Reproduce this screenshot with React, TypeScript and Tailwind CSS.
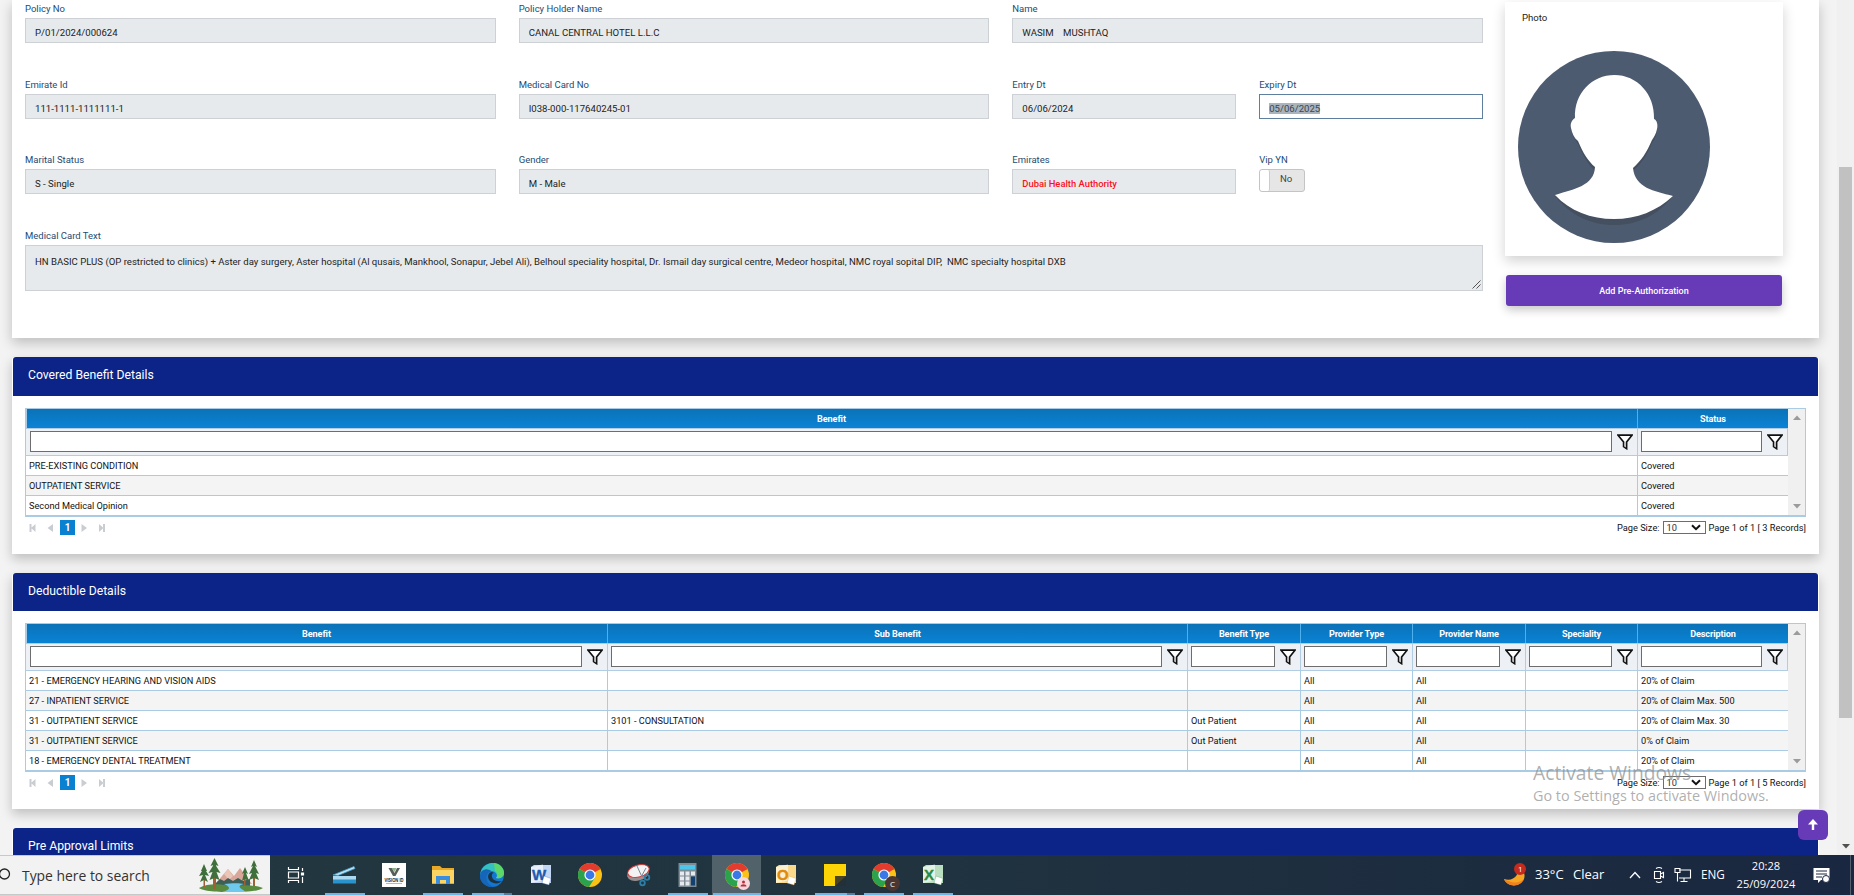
import React from "react";
import { useState } from "react";

interface field_props {
  label: string;
  value: string;
  box?: string;
  text?: string;
}

const Field = ({ label, value, box, text }: field_props) => {
  return (
    <div className="flex flex-col flex-1 min-w-0">
      <label className="h-[18px] leading-[18px] text-[9.5px] text-[#1d4b73] whitespace-nowrap">
        {label}
      </label>
      <div
        className={`h-[25px] border px-[9px] pt-[2px] leading-[23px] text-[9.6px] whitespace-pre ${
          box ? box : "bg-[#e7eaed] border-[#cdd1d5]"
        }`}
      >
        <span className={text ? text : "text-[#222]"}>{value}</span>
      </div>
    </div>
  );
};

const Filter_icon = () => (
  <svg width="16" height="16" viewBox="0 0 16 16" className="shrink-0">
    <path
      d="M1 1.2h14L9.6 8v6.6L6.6 12.6V8z"
      fill="#fff"
      stroke="#111"
      strokeWidth="1.7"
    />
    <path d="M7.4 8.4h1.6v5l-1.6-1z" fill="#bbb" />
  </svg>
);

interface table_props {
  columns: { name: string; width: string }[];
  rows: string[][];
}

const Grid_table = ({ columns, rows }: table_props) => {
  return (
    <div className="flex border border-[#a9cbe4] border-b-2 w-[1781px]">
      <div className="flex flex-col w-[1762px]">
        <div className="flex h-[19px] border-l border-[#a9cbe4] bg-gradient-to-b from-[#0b72b8] to-[#0a83d5]">
          {columns.map((col) => (
            <div
              key={col.name}
              className={`${col.width} first:-ml-px shrink-0 border-r border-[#4fb0ee] last:border-r-0 text-center text-white font-bold text-[9.1px] tracking-[-0.1px] leading-[20px]`}
            >
              {col.name}
            </div>
          ))}
        </div>
        <div className="flex h-[28px] bg-[#edf1f5] border-y border-[#b0cde3]">
          {columns.map((col) => (
            <div
              key={col.name}
              className={`${col.width} shrink-0 flex items-center border-r border-[#b0cde3] pl-[3px] first:pl-1 pr-1 pb-[1px]`}
            >
              <input className="flex-1 min-w-0 h-[21px] bg-white border border-[#6d6d6d] mr-[5px] outline-none" />
              <Filter_icon />
            </div>
          ))}
        </div>
        <div className="flex flex-col">
          {rows.map((row, i) => (
            <div
              key={i}
              className="flex h-5 bg-white even:bg-[#f4f4f4] border-b border-[#a9cbe4] last:border-b-0 last:h-[19px]"
            >
              {row.map((cell, j) => (
                <div
                  key={j}
                  className={`${columns[j].width} shrink-0 border-r border-[#a9cbe4] last:border-r-0 pl-[3px] text-[9.2px] leading-[19px] text-[#111] whitespace-nowrap`}
                >
                  {cell}
                </div>
              ))}
            </div>
          ))}
        </div>
      </div>
      <div className="flex flex-col items-center justify-between flex-1 bg-[#f0f0f0] pt-[6px] pb-[6px]">
        <svg width="8" height="5" viewBox="0 0 8 5">
          <path d="M0 5L4 0.5L8 5z" fill="#9b9b9b" />
        </svg>
        <svg width="8" height="5" viewBox="0 0 8 5">
          <path d="M0 0L4 4.5L8 0z" fill="#9b9b9b" />
        </svg>
      </div>
    </div>
  );
};

const Pager = ({ records }: { records: number }) => {
  return (
    <div className="flex items-center justify-between w-[1781px] h-[15px] mt-[3px]">
      <div className="flex items-center h-full">
        <svg width="35" height="10" viewBox="0 0 35 10" fill="#c9cdd1">
          <path d="M4.500 1h2v8h-2zM10.500 1v8L6 5z" />
          <path d="M28 1v8L22.500 5z" />
        </svg>
        <div className="w-[15px] h-[15px] bg-[#0a80d0] text-white font-bold text-[10px] leading-[15px] text-center">
          1
        </div>
        <svg width="35" height="10" viewBox="0 0 35 10" fill="#c9cdd1">
          <path d="M6.500 1v8L12 5z" />
          <path d="M24 1v8L28.500 5zM28 1h2v8h-2z" />
        </svg>
      </div>
      <div className="flex items-center h-full text-[9.25px] text-[#111] whitespace-nowrap">
        <span>Page Size:</span>
        <div className="flex items-center justify-between w-[43px] h-[13px] border border-[#6d6d6d] bg-white ml-[3px] mr-[3px] pl-[3px] pr-[4px] text-[#333]">
          <span>10</span>
          <svg width="10" height="7" viewBox="0 0 10 7">
            <path
              d="M1 1.200L5 5.200L9 1.200"
              fill="none"
              stroke="#111"
              strokeWidth="2"
            />
          </svg>
        </div>
        <span>Page 1 of 1 [ {records} Records]</span>
      </div>
    </div>
  );
};

const Panel_title = ({ title, height }: { title: string; height: string }) => (
  <div
    className={`${height} mx-[1px] shrink-0 bg-[#0c2488] rounded-t-[3px] pl-[15px] pt-[9px] text-white text-[12.2px] leading-[18px]`}
  >
    {title}
  </div>
);

const card_shadow = "shadow-[0_5px_12px_rgba(0,0,0,0.22)]";

const benefit_columns = [
  { name: "Benefit", width: "w-[1612px]" },
  { name: "Status", width: "w-[150px]" },
];

const benefit_rows = [
  ["PRE-EXISTING CONDITION", "Covered"],
  ["OUTPATIENT SERVICE", "Covered"],
  ["Second Medical Opinion", "Covered"],
];

const deductible_columns = [
  { name: "Benefit", width: "w-[582px]" },
  { name: "Sub Benefit", width: "w-[580px]" },
  { name: "Benefit Type", width: "w-[113px]" },
  { name: "Provider Type", width: "w-[112px]" },
  { name: "Provider Name", width: "w-[113px]" },
  { name: "Speciality", width: "w-[112px]" },
  { name: "Description", width: "w-[150px]" },
];

const deductible_rows = [
  ["21 - EMERGENCY HEARING AND VISION AIDS", "", "", "All", "All", "", "20% of Claim"],
  ["27 - INPATIENT SERVICE", "", "", "All", "All", "", "20% of Claim Max. 500"],
  ["31 - OUTPATIENT SERVICE", "3101 - CONSULTATION", "Out Patient", "All", "All", "", "20% of Claim Max. 30"],
  ["31 - OUTPATIENT SERVICE", "", "Out Patient", "All", "All", "", "0% of Claim"],
  ["18 - EMERGENCY DENTAL TREATMENT", "", "", "All", "All", "", "20% of Claim"],
];

const Avatar = () => (
  <svg width="192" height="192" viewBox="0 0 192 192" className="block">
    <circle cx="96" cy="96" r="96" fill="#4d5b70" />
    <g fill="#444f60">
      <path d="M53 78C54 84 57 88 60 93C64 103 70 113 76 119L90 104L102 104L116 119C123 113 130 103 134 92C137 88 139 84 139 78z" />
      <path d="M37 145C52 164 72 174 96 174C120 174 140 164 155 145z" />
    </g>
    <path
      d="M57 67C56 42 74 24 96.500 24C119 24 137 43 136 68C139 69 140 74 139 78C138 83 136 86 134 89C129 101 123 110 115 117C117 137 136 140 155 145C139 160 119 168 96 168C73 168 52 160 37 144C56 138 76 135 77 116C70 110 65 102 60 90C56 87 54 82 53 77C52 72 54 69 57 67z"
      fill="#fff"
    />
  </svg>
);

const Chrome = () => (
  <svg width="24" height="24" viewBox="0 0 24 24">
    <circle cx="12" cy="12" r="12" fill="#fbc116" />
    <path d="M12 12L1.600 6A12 12 0 0 1 22.400 6z" fill="#e33b2e" />
    <path d="M12 12L1.600 6A12 12 0 0 0 11 24L17 14.500z" fill="#2ba24c" />
    <path d="M12 6H22.400L17 8z" fill="#e33b2e" />
    <circle cx="12" cy="12" r="5.600" fill="#fff" />
    <circle cx="12" cy="12" r="4.400" fill="#3b78e7" />
  </svg>
);

const Office = ({ letter, color, light }: { letter: string; color: string; light: string }) => (
  <svg width="24" height="24" viewBox="0 0 24 24">
    <path d="M5 2h17v18H2V4z" fill={light} />
    <path d="M2 4L14 1.500v16L2 20z" fill="#fff" opacity="0.6" />
    <text x="3" y="16.500" fontSize="15" fontWeight="700" fontFamily="Liberation Sans, sans-serif" fill={color} stroke={color} strokeWidth="0.400">
      {letter}
    </text>
    <path d="M15 13l7 2.500-2 6.500-7-2z" fill="#fff" stroke={color} strokeWidth="0.300" />
  </svg>
);

const tasks = [
  {
    line: "",
    icon: (
      <svg width="18" height="18" viewBox="0 0 18 18" fill="none" stroke="#fff" strokeWidth="1.200">
        <path d="M1.500 1v2.500h10V1M1.500 17v-2.500h10V17M1.500 6h10v6h-10zM15.500 2v3M15.500 11v6" />
        <path d="M14.500 7h2v2h-2z" fill="#fff" />
      </svg>
    ),
  },
  {
    line: "w-10",
    icon: (
      <svg width="26" height="20" viewBox="0 0 26 20">
        <path d="M1 10L22 1.500l1 2L6 10.500z" fill="#bfe3f5" stroke="#4ba3d1" strokeWidth="0.800" />
        <path d="M1 11.500h23v7H1z" fill="#2b93cb" />
        <path d="M1 11h23v3.500H1z" fill="#a9d8f0" />
      </svg>
    ),
  },
  {
    line: "",
    icon: (
      <svg width="24" height="24" viewBox="0 0 24 24">
        <path d="M0 0h24v24H0z" fill="#fff" />
        <path d="M6.500 5h3.500l2.500 5L15 5h3l-4.500 8h-2.500z" fill="#56605a" />
        <path d="M9.500 5h5l-2 4z" fill="#8fb08a" />
        <text x="2.500" y="18.500" fontSize="4.800" fontWeight="700" fontFamily="Liberation Sans, sans-serif" fill="#222" textLength="19" lengthAdjust="spacingAndGlyphs">
          VISION ID
        </text>
        <path d="M4 20.500h16" stroke="#999" strokeWidth="0.700" />
      </svg>
    ),
  },
  {
    line: "w-10",
    icon: (
      <svg width="24" height="20" viewBox="0 0 24 20">
        <path d="M1 1h8l2 2h12v16H1z" fill="#e9a825" />
        <path d="M1 5h22v13H1z" fill="#fcd462" />
        <path d="M5 11h14v8h-4v-4H9v4H5z" fill="#3b8ede" />
      </svg>
    ),
  },
  {
    line: "w-10",
    stacked: true,
    icon: (
      <svg width="24" height="24" viewBox="0 0 24 24">
        <circle cx="12" cy="12" r="12" fill="#1477cf" />
        <path d="M1 8C4 1 10 0 13 0c7 0 11 5 11 10 0 4-4 6-8 5 2-2 1-6-4-7C7 7 3 8 0 13z" fill="#35c1c0" />
        <path d="M14 0c6 1 10 5 10 10 0 4-4 6-8 5 2-2 2-5-1-7z" fill="#5fd668" />
        <path d="M12 9c-5 1-5 7-1 10 4 2 8 2 11-1-3 1-9 0-10-4-.5-2 0-4 2-4z" fill="#1d3340" />
        <path d="M8 10c-4 6 0 12 6 14C4 25-3 16 1 9c3-4 8-3 10-1z" fill="#1565b8" />
      </svg>
    ),
  },
  { line: "", icon: <Office letter="W" color="#1f5ab0" light="#c3d6f3" /> },
  { line: "", icon: <Chrome /> },
  {
    line: "",
    icon: (
      <svg width="26" height="24" viewBox="0 0 26 24">
        <ellipse cx="12" cy="11" rx="11" ry="6.500" fill="#9a8f90" transform="rotate(-15 12 11)" />
        <ellipse cx="12.500" cy="8" rx="11" ry="6" fill="#f3f3f3" stroke="#d23a3a" transform="rotate(-15 12.500 8)" />
        <path d="M11 3l5 11M20 5l-5 9" stroke="#789" strokeWidth="1" />
        <circle cx="21" cy="14.500" r="2.300" fill="none" stroke="#2c7fa8" strokeWidth="1.800" />
        <circle cx="16.500" cy="20" r="2.300" fill="none" stroke="#2c7fa8" strokeWidth="1.800" />
      </svg>
    ),
  },
  {
    line: "w-10",
    icon: (
      <svg width="20" height="24" viewBox="0 0 20 24">
        <path d="M0.500 0h18v24h-18z" fill="#7d8b97" />
        <path d="M2 2h15v4.500H2z" fill="#4cc5ea" />
        <path d="M2 8.500h4v4H2zM7.500 8.500h4v4h-4zM13 8.500h4v4h-4zM2 13.500h4v4H2zM7.500 13.500h4v4h-4zM2 18.500h4v4H2zM7.500 18.500h4v4h-4z" fill="#e6eaed" />
        <path d="M13 13.500h4v9h-4z" fill="#14406f" />
      </svg>
    ),
  },
  {
    line: "w-12",
    active: true,
    icon: (
      <>
        <Chrome />
        <svg className="absolute right-[11px] bottom-[5px]" width="13" height="13" viewBox="0 0 13 13">
          <circle cx="6.500" cy="6.500" r="6.500" fill="#f7d9dd" />
          <circle cx="6.500" cy="5" r="1.500" fill="#b8303c" />
          <path d="M3.500 9.500c0-3 6-3 6 0z" fill="#b8303c" />
        </svg>
      </>
    ),
  },
  { line: "", icon: <Office letter="O" color="#e08a0c" light="#fbd98a" /> },
  {
    line: "w-10",
    stacked: true,
    icon: (
      <svg width="22" height="22" viewBox="0 0 22 22">
        <path d="M0 0h22v12l-10 10H0z" fill="#fdd406" />
        <path d="M11 12h11v10H11z" fill="#243038" />
        <path d="M11 12h11L11 22z" fill="#4a4426" />
      </svg>
    ),
  },
  {
    line: "w-10",
    icon: (
      <>
        <Chrome />
        <div className="absolute right-[8px] bottom-[4px] w-[15px] h-[15px] rounded-full bg-[#4a3733] text-white text-[8px] leading-[15px] text-center">
          C
        </div>
      </>
    ),
  },
  { line: "w-10", icon: <Office letter="X" color="#2c8a45" light="#b9dfc0" /> },
];

const Scene = () => (
  <svg width="66" height="36" viewBox="0 0 66 36">
    <path d="M18 26L30 12l6 7 6-8 12 16z" fill="#d9a79a" />
    <path d="M26 17l4-5 5 7-4 4z" fill="#e9c6b8" />
    <path d="M18 26l4-4 4 2 4-3 5 3 5-3 5 3 7-2v8H18z" fill="#3c5f5a" />
    <path d="M1 31c8-5 20-4 26-3 10 2 24-2 38 3-6 4-20 4-30 4S6 35 1 31z" fill="#5a8a3e" />
    <path d="M26 27c8-1 16-1 20 0-8 2-4 4 2 8H24c10-3 8-5 2-8z" fill="#6fc9ee" />
    <path d="M5.500 12h1.500v18H5.500zM15 6h3v26h-3zM46 12h1.500v17H46zM55 8h2v21h-2z" fill="#a05f35" />
    <path d="M6 7l3 7H8l3 5-4-1 3 7-4-2-4 2 3-7-4 1 3-5H3zM16.500 1l4 8-3-1 5 8-4-1 3 8-5-2-5 2 3-8-4 1 5-8-3 1zM47 10l3 7-2-1 3 8-4-2-3 2 2-8-2 1zM56 3l3 7-2-1 4 8-3-1 3 7-5-2-5 2 3-7-3 1 4-8-2 1z" fill="#3f6f3a" />
  </svg>
);

const App = () => {
  const [vip, set_vip] = useState<boolean>(false);

  return (
    <div className="h-screen w-full flex flex-col overflow-hidden bg-[#f0f0f0] font-[Roboto,sans-serif]">
      <div className="relative flex h-[855px] shrink-0 overflow-hidden">
        <div className="flex flex-col w-[1837px] px-[12px] pr-[18px] bg-[#f3f3f3]">
          {/* member details */}
          <div className={`flex h-[338px] shrink-0 bg-white pl-[13px] ${card_shadow}`}>
            <div className="flex flex-col w-[1458px]">
              <div className="flex gap-[23px] h-[76px]">
                <Field label="Policy No" value="P/01/2024/000624" />
                <Field label="Policy Holder Name" value="CANAL CENTRAL HOTEL L.L.C" />
                <Field label="Name" value="WASIM    MUSHTAQ" />
              </div>
              <div className="flex gap-[23px] h-[75px]">
                <Field label="Emirate Id" value="111-1111-1111111-1" />
                <Field label="Medical Card No" value="I038-000-117640245-01" />
                <div className="flex flex-1 gap-[23px]">
                  <Field label="Entry Dt" value="06/06/2024" />
                  <Field
                    label="Expiry Dt"
                    value="05/06/2025"
                    box="bg-white border-[#5f7f9e]"
                    text="bg-[#a9b4bd] text-[#3c4650]"
                  />
                </div>
              </div>
              <div className="flex gap-[23px] h-[76px]">
                <Field label="Marital Status" value="S - Single" />
                <Field label="Gender" value="M - Male" />
                <div className="flex flex-1 gap-[23px]">
                  <Field
                    label="Emirates"
                    value="Dubai Health Authority"
                    text="text-[#fb1020] text-[9.4px] font-medium"
                  />
                  <div className="flex flex-col flex-1">
                    <label className="h-[18px] leading-[18px] text-[9.5px] text-[#1d4b73]">
                      Vip YN
                    </label>
                    <button
                      className="flex w-[46px] h-[23px] border border-[#c4c4c4] rounded-[3px] bg-[#e6e6e6] overflow-hidden"
                      onClick={() => set_vip(!vip)}
                    >
                      <span className="w-[10px] h-full bg-white border-r border-[#ccc] rounded-[2px]"></span>
                      <span className="flex-1 text-[9.6px] leading-[18px] text-[#444] text-center pr-[2px]">
                        {vip ? "Yes" : "No"}
                      </span>
                    </button>
                  </div>
                </div>
              </div>
              <label className="h-[18px] leading-[18px] text-[9.5px] text-[#1d4b73]">
                Medical Card Text
              </label>
              <div className="relative h-[46px] bg-[#e7eaed] border border-[#cdd1d5] px-[9px] pt-[5px] text-[9.59px] leading-[22px] text-[#222] whitespace-pre">
                HN BASIC PLUS (OP restricted to clinics) + Aster day surgery, Aster hospital (Al qusais, Mankhool, Sonapur, Jebel Ali), Belhoul speciality hospital, Dr. Ismail day surgical centre, Medeor hospital, NMC royal sopital DIP,  NMC specialty hospital DXB
                <svg className="absolute right-[1px] bottom-[1px]" width="9" height="9" viewBox="0 0 9 9">
                  <path d="M0.500 8.500L8.500 0.500M4.500 8.500L8.500 4.500" stroke="#555" strokeWidth="1" />
                </svg>
              </div>
            </div>
            <div className="flex flex-col ml-[22px] pt-[2px] w-[278px]">
              <div className="h-[254px] bg-white pl-[13px] shadow-[0_5px_12px_rgba(0,0,0,0.18)]">
                <div className="h-[49px] pl-[4px] pt-[8px] text-[9.6px] leading-[16px] text-[#222]">
                  Photo
                </div>
                <Avatar />
              </div>
              <button className="h-[31px] mt-[19px] mx-[1px] pt-[3px] rounded-[3px] bg-[#673ab7] text-white text-[9px] font-medium shadow-[0_4px_10px_rgba(0,0,0,0.22)] cursor-pointer">
                Add Pre-Authorization
              </button>
            </div>
          </div>

          <div className={`flex flex-col h-[197px] shrink-0 bg-white mt-[19px] rounded-t-[3px] ${card_shadow}`}>
            <Panel_title title="Covered Benefit Details" height="h-[39px]" />
            <div className="pl-[13px] pt-[12px]">
              <Grid_table columns={benefit_columns} rows={benefit_rows} />
              <Pager records={3} />
            </div>
          </div>

          <div className={`flex flex-col h-[236px] shrink-0 bg-white mt-[19px] rounded-t-[3px] ${card_shadow}`}>
            <Panel_title title="Deductible Details" height="h-[38px]" />
            <div className="pl-[13px] pt-[12px]">
              <Grid_table columns={deductible_columns} rows={deductible_rows} />
              <Pager records={5} />
            </div>
          </div>

          <div className="flex flex-col h-[60px] shrink-0 bg-white mt-[19px] rounded-t-[3px]">
            <Panel_title title="Pre Approval Limits" height="h-[39px]" />
          </div>
        </div>

        {/* page scrollbar */}
        <div className="flex flex-col items-center w-[17px] bg-[#f0f0f0]">
          <div className="w-[13px] h-[551px] mt-[167px] bg-[#c1c1c1]"></div>
          <svg className="mt-[126px]" width="8" height="5" viewBox="0 0 8 5">
            <path d="M0 0L4 4.500L8 0z" fill="#505050" />
          </svg>
        </div>

        <div className="absolute left-[1533px] top-[760px] flex flex-col font-['Open_Sans',sans-serif] text-[#8c8c8c]/70 whitespace-nowrap pointer-events-none">
          <span className="text-[19.3px] leading-[25px]">Activate Windows</span>
          <span className="text-[14.4px] leading-[21px]">
            Go to Settings to activate Windows.
          </span>
        </div>

        <button className="absolute left-[1798px] top-[810px] w-[30px] h-[30px] rounded-[6px] bg-[#673ab7] flex items-center justify-center cursor-pointer">
          <svg className="-mt-[2px]" width="12" height="13" viewBox="0 0 12 13">
            <path d="M6 1L11 6.500H7.200V12H4.800V6.500H1z" fill="#fff" />
          </svg>
        </button>
      </div>

      {/* windows taskbar */}
      <div className="flex h-10 shrink-0 bg-gradient-to-r from-[#223840] via-[#20333f] to-[#1a2740] font-['Open_Sans',sans-serif] text-white">
        <div className="flex items-center w-[270px] bg-[#f2f2f2] border-y border-[#c8c8c8] text-[#333]">
          <svg className="-mt-[3px]" width="12" height="14" viewBox="0 0 12 14">
            <circle cx="4.500" cy="7" r="5" fill="none" stroke="#222" strokeWidth="1.300" />
          </svg>
          <span className="ml-[10px] mt-[2px] text-[13.9px] whitespace-nowrap">Type here to search</span>
          <div className="ml-auto mr-[6px]">
            <Scene />
          </div>
        </div>
        <div className="flex ml-[1px]">
          {tasks.map((task, i) => (
            <div
              key={i}
              className={`relative flex items-center justify-center w-[49px] h-10 ${
                task.active ? "bg-[#52626b]" : ""
              }`}
            >
              {task.icon}
              {task.line ? (
                <div className={`absolute bottom-0 flex justify-end h-[2px] bg-[#76b1e4] ${task.line}`}>
                  {task.stacked ? <div className="w-2 h-full bg-[#557c9c]"></div> : ""}
                </div>
              ) : (
                ""
              )}
            </div>
          ))}
        </div>
        <div className="flex items-center ml-auto text-[13px]">
          <svg width="24" height="26" viewBox="0 0 24 26">
            <path d="M13 4c5 9-3 16-12 13 3 8 16 9 20 0 2-5-1-11-8-13z" fill="#f5a623" />
            <path d="M1 17c3 8 16 9 20 0-5 5-13 4-20 0z" fill="#f08020" />
            <circle cx="17" cy="7" r="6" fill="#c42b1c" />
            <text x="15" y="10" fontSize="8" fill="#fff" fontFamily="Open Sans, sans-serif">
              1
            </text>
          </svg>
          <span className="ml-[8px] w-[38px] whitespace-nowrap">33°C</span>
          <span className="w-[56px]">Clear</span>
          <svg width="12" height="8" viewBox="0 0 12 8" fill="none" stroke="#fff" strokeWidth="1.300">
            <path d="M1 7l5-5.500L11 7" />
          </svg>
          <svg className="ml-[12px]" width="12" height="18" viewBox="0 0 12 18" fill="none" stroke="#fff" strokeWidth="1.100">
            <path d="M3 2.500q3-2 6 0M3 15.500q3 2 6 0M1.500 5.500h6v7h-6zM7.500 8l3-1.500v5l-3-1.500" />
          </svg>
          <svg className="ml-[9px]" width="18" height="16" viewBox="0 0 18 16" fill="none" stroke="#fff" strokeWidth="1.100">
            <path d="M5 3h11.500v8H5M1 1.500h5v4H1zM3.500 5.500v9M10 11v3.500M6.500 14.500h7" />
          </svg>
          <span className="ml-[9px] w-[36px] text-[11.7px]">ENG</span>
          <div className="flex flex-col items-center w-[58px] text-[11.1px] leading-[18px] whitespace-nowrap">
            <span>20:28</span>
            <span>25/09/2024</span>
          </div>
          <svg className="ml-[18px]" width="17" height="17" viewBox="0 0 17 17">
            <path d="M0.500 1h16v12H8l-3 3v-3H0.500z" fill="#fff" />
            <path d="M3 4h11M3 7h11M3 10h6" stroke="#1b2940" strokeWidth="1" />
            <circle cx="13" cy="12" r="3.500" fill="#fff" stroke="#1b2940" />
          </svg>
          <div className="w-px h-10 bg-[#55606f] ml-[20px] mr-[3px]"></div>
        </div>
      </div>
    </div>
  );
};

export default App;
